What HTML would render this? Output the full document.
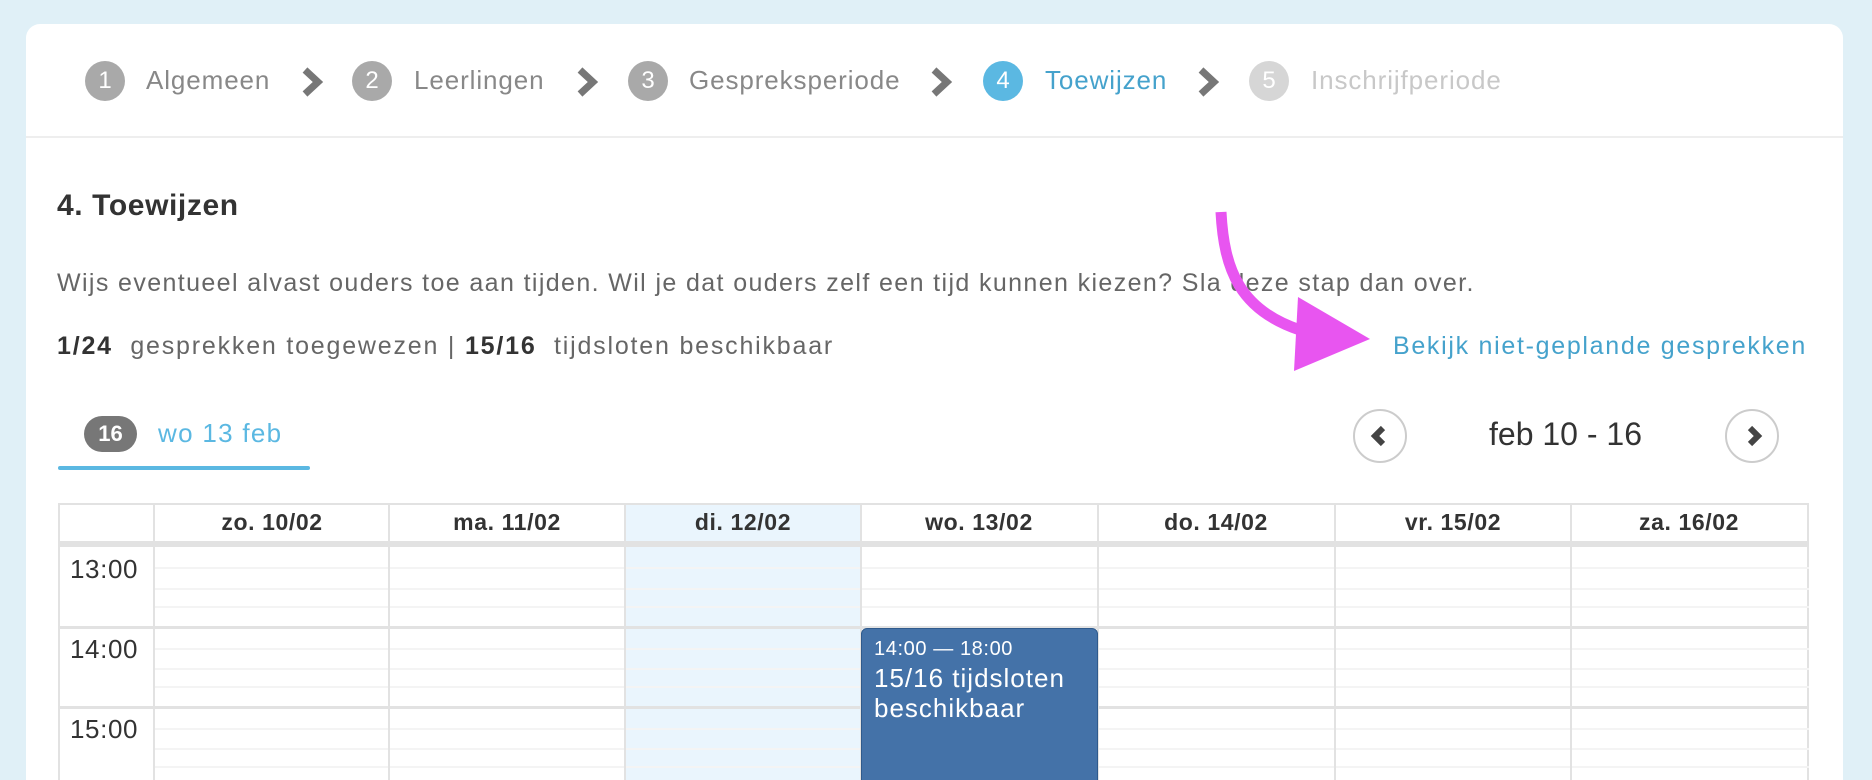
<!DOCTYPE html>
<html><head><meta charset="utf-8"><style>
*{margin:0;padding:0;box-sizing:border-box}
html,body{width:1872px;height:780px;overflow:hidden}
body{background:#e0f0f7;font-family:"Liberation Sans",sans-serif;position:relative}
.card{position:absolute;left:26px;top:24px;width:1817px;height:756px;background:#fff;border-radius:14px 14px 0 0}
.a{position:absolute;white-space:nowrap}
.c{position:absolute;width:40px;height:40px;border-radius:50%;color:#fff;font-size:24px;text-align:center;line-height:40px;top:61px}
.st{position:absolute;top:65px;font-size:26px;color:#888;letter-spacing:0.9px}
.chev{position:absolute;top:66px}
.hl{position:absolute;left:154px;width:1655px;height:2px;background:#f4f4f4}
.hh{position:absolute;left:58px;width:1751px;height:3px;background:#e2e2e2}
.vl{position:absolute;top:503px;width:2px;height:277px;background:#e2e2e2}
.dh{position:absolute;top:509px;font-size:23px;font-weight:bold;color:#333;text-align:center;width:236px;letter-spacing:0.6px}
.tm{position:absolute;left:70px;font-size:26px;color:#333;letter-spacing:0.6px}
</style></head><body>
<div class="card"></div>
<div style="position:absolute;left:26px;top:136px;width:1817px;height:2px;background:#eee"></div>

<div class="c" style="left:85px;background:#a9a9a9">1</div><div class="st" style="left:146px">Algemeen</div>
<svg class="chev" style="left:300px" width="26" height="32" viewBox="0 0 26 32"><path d="M5 4 L18 16 L5 28" stroke="#777" stroke-width="7" fill="none"/></svg>
<div class="c" style="left:352px;background:#a9a9a9">2</div><div class="st" style="left:414px">Leerlingen</div>
<svg class="chev" style="left:575px" width="26" height="32" viewBox="0 0 26 32"><path d="M5 4 L18 16 L5 28" stroke="#777" stroke-width="7" fill="none"/></svg>
<div class="c" style="left:628px;background:#a9a9a9">3</div><div class="st" style="left:689px">Gespreksperiode</div>
<svg class="chev" style="left:929px" width="26" height="32" viewBox="0 0 26 32"><path d="M5 4 L18 16 L5 28" stroke="#777" stroke-width="7" fill="none"/></svg>
<div class="c" style="left:983px;background:#5bb8e2">4</div><div class="st" style="left:1045px;color:#45a2cc">Toewijzen</div>
<svg class="chev" style="left:1196px" width="26" height="32" viewBox="0 0 26 32"><path d="M5 4 L18 16 L5 28" stroke="#777" stroke-width="7" fill="none"/></svg>
<div class="c" style="left:1249px;background:#d6d6d6">5</div><div class="st" style="left:1311px;color:#c8c8c8">Inschrijfperiode</div>

<div class="a" style="left:57px;top:189px;font-size:30px;color:#333;font-weight:bold;letter-spacing:0.6px">4. Toewijzen</div>
<div class="a" style="left:57px;top:269px;font-size:25px;color:#666;letter-spacing:1.38px">Wijs eventueel alvast ouders toe aan tijden. Wil je dat ouders zelf een tijd kunnen kiezen? Sla deze stap dan over.</div>
<div class="a" style="left:57px;top:332px;font-size:25px;color:#666;letter-spacing:1.8px"><b style="color:#333">1/24</b>&nbsp; gesprekken toegewezen | <b style="color:#333">15/16</b>&nbsp; tijdsloten beschikbaar</div>
<div class="a" style="right:65px;top:332px;font-size:25px;color:#45a2cc;letter-spacing:1.7px">Bekijk niet-geplande gesprekken</div>

<svg style="position:absolute;left:1200px;top:205px" width="190" height="180" viewBox="1200 205 190 180">
<path d="M1221 212 C1224 270 1240 310 1300 330" stroke="#e855f0" stroke-width="11" fill="none"/>
<polygon points="1298,297 1370,339 1294,371" fill="#e855f0"/>
</svg>

<div style="position:absolute;left:84px;top:416px;width:53px;height:36px;border-radius:18px;background:#777;color:#fff;font-weight:bold;font-size:22px;text-align:center;line-height:36px">16</div>
<div class="a" style="left:158px;top:418px;font-size:26px;color:#5bb8e2;letter-spacing:1.3px">wo 13 feb</div>
<div style="position:absolute;left:58px;top:466px;width:252px;height:4px;background:#5bb8e2;border-radius:2px"></div>

<div style="position:absolute;left:1353px;top:409px;width:54px;height:54px;border-radius:50%;border:2px solid #ccc"></div>
<svg style="position:absolute;left:1368px;top:424px" width="24" height="24" viewBox="0 0 24 24"><path d="M15 4 L7 12 L15 20" stroke="#444" stroke-width="6" fill="none"/></svg>
<div style="position:absolute;left:1725px;top:409px;width:54px;height:54px;border-radius:50%;border:2px solid #ccc"></div>
<svg style="position:absolute;left:1741px;top:424px" width="24" height="24" viewBox="0 0 24 24"><path d="M9 4 L17 12 L9 20" stroke="#444" stroke-width="6" fill="none"/></svg>
<div class="a" style="left:1489px;top:416px;font-size:32px;color:#333;letter-spacing:0px">feb 10 - 16</div>

<!-- table -->
<div style="position:absolute;left:58px;top:503px;width:1751px;height:290px;border:2px solid #e2e2e2;border-bottom:none"></div>
<div style="position:absolute;left:625px;top:505px;width:236px;height:280px;background:#eaf5fd"></div>
<div class="hh" style="top:541px;height:6px"></div>
<div class="hl" style="top:567px"></div>
<div class="hl" style="top:588px"></div>
<div class="hl" style="top:606px"></div>
<div class="hh" style="top:626px"></div>
<div class="hl" style="top:648px"></div>
<div class="hl" style="top:668px"></div>
<div class="hl" style="top:686px"></div>
<div class="hh" style="top:706px"></div>
<div class="hl" style="top:728px"></div>
<div class="hl" style="top:748px"></div>
<div class="hl" style="top:766px"></div>
<div class="vl" style="left:153px"></div><div class="vl" style="left:388px"></div><div class="vl" style="left:624px"></div><div class="vl" style="left:860px"></div><div class="vl" style="left:1097px"></div><div class="vl" style="left:1334px"></div><div class="vl" style="left:1570px"></div>
<div class="dh" style="left:154px">zo. 10/02</div>
<div class="dh" style="left:389px">ma. 11/02</div>
<div class="dh" style="left:625px">di. 12/02</div>
<div class="dh" style="left:861px">wo. 13/02</div>
<div class="dh" style="left:1098px">do. 14/02</div>
<div class="dh" style="left:1335px">vr. 15/02</div>
<div class="dh" style="left:1571px">za. 16/02</div>
<div class="tm" style="top:554px">13:00</div>
<div class="tm" style="top:634px">14:00</div>
<div class="tm" style="top:714px">15:00</div>

<div style="position:absolute;left:861px;top:628px;width:237px;height:170px;background:#4472a8;border:1px solid #2f5a8c;border-radius:6px;color:#fff;padding:9px 0 0 12px">
<div style="font-size:20px;line-height:23px;letter-spacing:0.6px">14:00 — 18:00</div>
<div style="font-size:26px;line-height:30px;margin-top:2px;letter-spacing:1px">15/16 tijdsloten<br>beschikbaar</div>
</div>
</body></html>
